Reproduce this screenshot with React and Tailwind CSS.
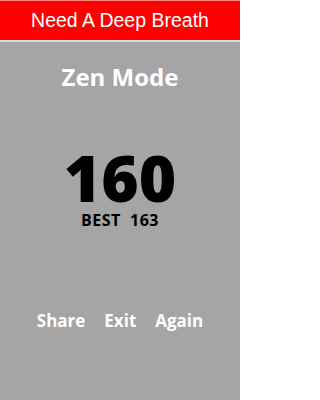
export default function App() {
  return (
    <div className="w-[240px] h-[400px] bg-[#a5a5a5] flex flex-col overflow-hidden">
      <div className="h-[40px] bg-[#ff0000] border-t border-[#ff8080] flex items-center justify-center shrink-0">
        <span className="text-white text-[19.5px] leading-none" style={{ fontFamily: '"Liberation Sans", Arial, sans-serif' }}>Need A Deep Breath</span>
      </div>
      <div className="h-[2px] bg-[#d8d8d8] shrink-0"></div>
      <div className="flex flex-col items-center" style={{ fontFamily: '"Open Sans", sans-serif' }}>
        <div className="mt-[20px] text-white font-bold text-[24px] leading-[30px]">Zen Mode</div>
        <div className="mt-[60px] text-black font-extrabold text-[64px] leading-[52px]">160</div>
        <div className="mt-[7px] text-black font-bold text-[16px] leading-[18px] tracking-[0.5px]">BEST&nbsp;&nbsp;163</div>
        <div className="mt-[82px] flex gap-[19px] text-white font-bold text-[17px] leading-[20px]">
          <span>Share</span>
          <span>Exit</span>
          <span>Again</span>
        </div>
      </div>
    </div>
  );
}
